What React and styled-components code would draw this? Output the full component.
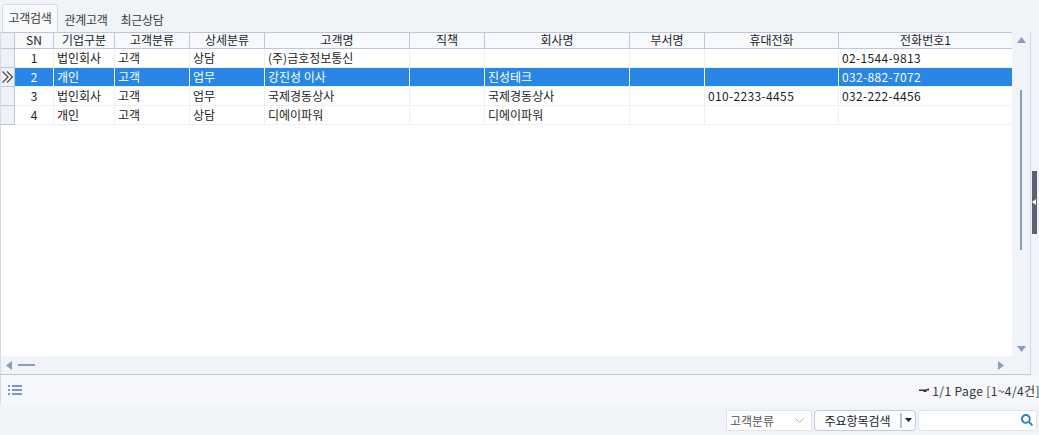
import React from 'react';
import styled, { createGlobalStyle } from 'styled-components';
import { FaSearch } from 'react-icons/fa';

const columns = [
  { key: 'sn', label: 'SN', width: 39, center: true },
  { key: 'kind', label: '기업구분', width: 61 },
  { key: 'group', label: '고객분류', width: 75 },
  { key: 'detail', label: '상세분류', width: 75 },
  { key: 'name', label: '고객명', width: 145 },
  { key: 'title', label: '직책', width: 75 },
  { key: 'company', label: '회사명', width: 145 },
  { key: 'dept', label: '부서명', width: 75 },
  { key: 'mobile', label: '휴대전화', width: 134, wide: true },
  { key: 'phone', label: '전화번호1', width: 174, wide: true },
];

const rows = [
  { sn: 1, kind: '법인회사', group: '고객', detail: '상담', name: '(주)금호정보통신', phone: '02-1544-9813' },
  { sn: 2, kind: '개인', group: '고객', detail: '업무', name: '강진성 이사', company: '진성테크', phone: '032-882-7072' },
  { sn: 3, kind: '법인회사', group: '고객', detail: '업무', name: '국제경동상사', company: '국제경동상사', mobile: '010-2233-4455', phone: '032-222-4456' },
  { sn: 4, kind: '개인', group: '고객', detail: '상담', name: '디에이파워', company: '디에이파워' },
];

const GlobalStyle = createGlobalStyle`
  html, body {
    margin: 0;
    padding: 0;
    background: #f0f3f7;
    overflow: hidden;
  }
  * {
    box-sizing: border-box;
  }
`;

const Page = styled.div`
  width: 1039px;
  height: 435px;
  display: flex;
  flex-direction: column;
  background: #f0f3f7;
  color: #1c1c1c;
  font-family: "Noto Sans CJK KR", "Noto Sans", sans-serif;
  font-size: 12px;
`;

const Tabs = styled.div`
  height: 32px;
  display: flex;
  align-items: flex-end;
  padding-left: 2px;
`;

const Tab = styled.div`
  height: ${(p) => (p.$active ? '28px' : '26px')};
  width: 56px;
  display: flex;
  align-items: center;
  justify-content: center;
  padding-bottom: ${(p) => (p.$active ? '2px' : '1px')};
  background: ${(p) => (p.$active ? '#f8f9fb' : 'transparent')};
  border: 1px solid ${(p) => (p.$active ? '#d5dbe4' : 'transparent')};
  border-bottom: none;
  border-radius: 3px 3px 0 0;
  color: #3a3a3a;
  letter-spacing: -0.3px;
`;

const Middle = styled.div`
  display: flex;
  height: 343px;
`;

const Panel = styled.div`
  width: 1031px;
  display: grid;
  grid-template-columns: 1fr 18px;
  grid-template-rows: 1fr 18px;
  border-right: 1px solid #d3d9e2;
  border-bottom: 1px solid #bcc4d0;
  border-left: 1px solid #d6dce6;
  background: #f0f3f7;
`;

const GridArea = styled.div`
  background: #fff;
  border-top: 1px solid #b9c8de;
  overflow: hidden;
`;

const Row = styled.div`
  display: flex;
  height: ${(p) => (p.$header ? '16px' : '19px')};
  background: ${(p) => (p.$header ? '#f7f9fc' : p.$selected ? '#2886e6' : '#fff')};
  color: ${(p) => (p.$selected ? '#fff' : '#1c1c1c')};
  border-bottom: 1px solid ${(p) => (p.$header ? '#b9c8de' : '#eceff3')};
`;

const Indicator = styled.div`
  width: 14px;
  flex: none;
  display: flex;
  align-items: center;
  justify-content: center;
  background: #eef1f6;
  border-right: 1px solid #b9c8de;
  box-shadow: 0 1px 0 #b9c8de;
`;

const Cell = styled.div`
  flex: none;
  width: ${(p) => p.$width}px;
  padding: 0 ${(p) => (p.$center ? 0 : 3)}px;
  line-height: 17px;
  white-space: nowrap;
  overflow: hidden;
  text-align: ${(p) => (p.$center ? 'center' : 'left')};
  letter-spacing: ${(p) => (p.$wide ? '0.35px' : '0')};
  border-right: 1px solid ${(p) => (p.$selected ? '#fff' : '#eceff3')};
`;

const HeadCell = styled.div`
  flex: none;
  width: ${(p) => p.$width}px;
  line-height: 14px;
  text-align: center;
  white-space: nowrap;
  border-right: 1px solid #b9c8de;
`;

const VScroll = styled.div`
  display: flex;
  flex-direction: column;
  align-items: center;
  padding: 5px 0 4px;
  justify-content: space-between;
`;

const VTrack = styled.div`
  flex: 1;
  width: 100%;
  padding-top: 47px;
  padding-bottom: 96px;
  display: flex;
  justify-content: center;
`;

const VThumb = styled.div`
  width: 2px;
  background: #8d9db5;
`;

const HScroll = styled.div`
  display: flex;
  align-items: center;
  padding: 0 8px 0 5px;
`;

const HThumb = styled.div`
  width: 17px;
  height: 2px;
  margin-left: 6px;
  background: #8d9db5;
`;

const HSpacer = styled.div`
  flex: 1;
`;

const Corner = styled.div``;

const Arrow = styled.svg`
  display: block;
  fill: #8d9db5;
`;

const Splitter = styled.div`
  flex: none;
  width: 8px;
  display: flex;
  align-items: center;
  padding-left: 1px;
`;

const SplitterBar = styled.div`
  width: 5px;
  height: 63px;
  margin-top: -3px;
  background: #5d5f73;
  display: flex;
  align-items: center;
`;

const Status = styled.div`
  height: 30px;
  display: flex;
  align-items: center;
  justify-content: space-between;
  padding: 0 0 0 7px;
  background: #f5f7fa;
  border-left: 1px solid #d6dce6;
`;

const PageInfo = styled.div`
  display: flex;
  align-items: center;
  gap: 3px;
  margin-right: -1px;
  color: #333;
  letter-spacing: 0.4px;
`;

const Toolbar = styled.div`
  flex: 1;
  display: flex;
  align-items: center;
  justify-content: flex-end;
  gap: 2px;
  padding: 0 2px 0 0;
`;

const Select = styled.div`
  width: 86px;
  height: 21px;
  display: flex;
  align-items: center;
  justify-content: space-between;
  padding: 0 7px 0 3px;
  background: #fff;
  border: 1px solid #dfe3ea;
  color: #555;
`;

const SearchButton = styled.div`
  width: 102px;
  height: 21px;
  display: flex;
  align-items: center;
  background: #fbfcfd;
  border: 1px solid #c3ccd9;
  border-radius: 4px;
  color: #1c1c1c;
`;

const SearchLabel = styled.div`
  flex: 1;
  text-align: center;
  line-height: 17px;
`;

const Caret = styled.div`
  width: 15px;
  height: 15px;
  display: flex;
  align-items: center;
  justify-content: center;
  border-left: 2px solid #b9c2ce;
`;

const SearchBox = styled.div`
  width: 119px;
  height: 21px;
  display: flex;
  align-items: center;
  justify-content: flex-end;
  padding-right: 3px;
  background: #fff;
  border: 1px solid #dfe3ea;
  border-radius: 3px;
  color: #2f80c8;
`;

const App = () => {
  return (
    <Page>
      <GlobalStyle />
      <Tabs>
        <Tab $active>고객검색</Tab>
        <Tab>관계고객</Tab>
        <Tab>최근상담</Tab>
      </Tabs>
      <Middle>
        <Panel>
          <GridArea>
            <Row $header>
              <Indicator />
              {columns.map((c) => (
                <HeadCell key={c.key} $width={c.width}>{c.label}</HeadCell>
              ))}
            </Row>
            {rows.map((r) => {
              const selected = r.sn === 2;
              return (
                <Row key={r.sn} $selected={selected}>
                  <Indicator>
                    {selected && (
                      <svg width="12" height="12" viewBox="0 0 12 12" fill="none" stroke="#4a4a4a" strokeWidth="1.2">
                        <path d="M.5 .5l5.500 5.500L.5 11.500M5 .5l5.500 5.500L5 11.500" />
                      </svg>
                    )}
                  </Indicator>
                  {columns.map((c) => (
                    <Cell key={c.key} $width={c.width} $center={c.center} $wide={c.wide} $selected={selected}>
                      {r[c.key]}
                    </Cell>
                  ))}
                </Row>
              );
            })}
          </GridArea>
          <VScroll>
            <Arrow width="9" height="6" viewBox="0 0 9 6"><path d="M4.5 0L9 6H0z" /></Arrow>
            <VTrack><VThumb /></VTrack>
            <Arrow width="9" height="6" viewBox="0 0 9 6"><path d="M0 0h9L4.5 6z" /></Arrow>
          </VScroll>
          <HScroll>
            <Arrow width="6" height="9" viewBox="0 0 6 9"><path d="M6 0v9L0 4.5z" /></Arrow>
            <HThumb />
            <HSpacer />
            <Arrow width="6" height="9" viewBox="0 0 6 9"><path d="M0 0l6 4.5L0 9z" /></Arrow>
          </HScroll>
          <Corner />
        </Panel>
        <Splitter>
          <SplitterBar>
            <svg width="4" height="6" viewBox="0 0 4 6"><path d="M4 0v6L0 3z" fill="#fff" /></svg>
          </SplitterBar>
        </Splitter>
      </Middle>
      <Status>
        <svg width="15" height="10" viewBox="0 0 15 10" fill="#7b97c6">
          <path d="M0 0h2v2H0zM4 0h10v2H4zM0 4h2v2H0zM4 4h10v2H4zM0 8h2v2H0zM4 8h10v2H4z" />
        </svg>
        <PageInfo>
          <svg width="10" height="5" viewBox="0 0 10 5" fill="#333">
            <path d="M0 1.500h6L10 .5v2H7.500V4H5L4 3H0z" />
          </svg>
          1/1 Page [1~4/4건]
        </PageInfo>
      </Status>
      <Toolbar>
        <Select>
          고객분류
          <svg width="9" height="5" viewBox="0 0 9 5" fill="none" stroke="#a8afba">
            <path d="M.5.5l4 4 4-4" />
          </svg>
        </Select>
        <SearchButton>
          <SearchLabel>주요항목검색</SearchLabel>
          <Caret>
            <svg width="7" height="4" viewBox="0 0 7 4"><path d="M0 0h7L3.500 4z" fill="#222" /></svg>
          </Caret>
        </SearchButton>
        <SearchBox><FaSearch size={12} /></SearchBox>
      </Toolbar>
    </Page>
  );
};

export default App;
